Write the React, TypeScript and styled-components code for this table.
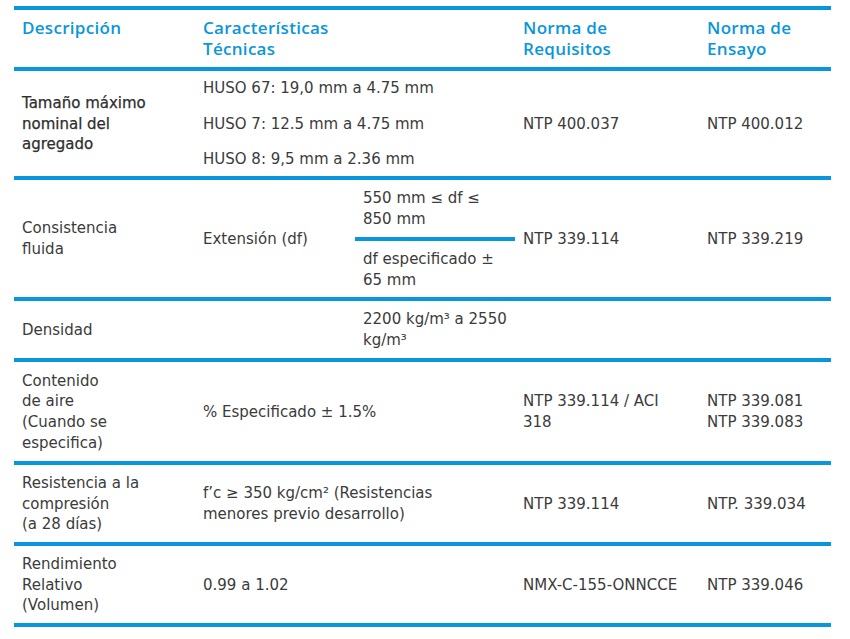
import React from 'react';
import styled, { createGlobalStyle } from 'styled-components';

const BLUE = '#0a96dc';
const TEXT = '#3b3b3b';

const GlobalStyle = createGlobalStyle`
  html, body {
    margin: 0;
    padding: 0;
    background: #ffffff;
  }
  body {
    font-family: "DejaVu Sans", "Open Sans", sans-serif;
    color: ${TEXT};
  }
`;

const Page = styled.div`
  padding: 6px 0 0 14px;
`;

const Table = styled.table`
  width: 817px;
  table-layout: fixed;
  border-collapse: separate;
  border-spacing: 0;
  border-top: 4px solid ${BLUE};
`;

const Row = styled.tr<{ $h: number }>`
  height: ${(p) => p.$h}px;
`;

const HeadCell = styled.th`
  text-align: left;
  vertical-align: top;
  padding: 7px 8px 0;
  font-family: "Open Sans", "Noto Sans", sans-serif;
  font-size: 17px;
  font-weight: 600;
  letter-spacing: 0.3px;
  line-height: 21px;
  color: ${BLUE};
  border-bottom: 4px solid ${BLUE};
`;

const Cell = styled.td<{ $strong?: boolean }>`
  vertical-align: middle;
  padding: 1px 8px 0;
  font-size: 15px;
  line-height: 20.7px;
  font-weight: 400;
  color: ${(p) => (p.$strong ? '#2e2e2e' : TEXT)};
  -webkit-text-stroke: ${(p) => (p.$strong ? '0.25px' : '0')};
  border-bottom: 4px solid ${BLUE};
`;

const Stack = styled.div`
  display: flex;
  flex-direction: column;
  gap: 15px;
`;

export default function App(): JSX.Element {
  return (
    <Page>
      <GlobalStyle />
      <Table>
        <colgroup>
          <col style={{ width: 181 }} />
          <col style={{ width: 160 }} />
          <col style={{ width: 160 }} />
          <col style={{ width: 184 }} />
          <col style={{ width: 132 }} />
        </colgroup>
        <thead>
          <Row $h={61}>
            <HeadCell>Descripción</HeadCell>
            <HeadCell colSpan={2}>Características<br />Técnicas</HeadCell>
            <HeadCell>Norma de<br />Requisitos</HeadCell>
            <HeadCell>Norma de<br />Ensayo</HeadCell>
          </Row>
        </thead>
        <tbody>
          <Row $h={109}>
            <Cell $strong>Tamaño máximo<br />nominal del<br />agregado</Cell>
            <Cell colSpan={2}>
              <Stack>
                <span>HUSO 67: 19,0 mm a 4.75 mm</span>
                <span>HUSO 7: 12.5 mm a 4.75 mm</span>
                <span>HUSO 8: 9,5 mm a 2.36 mm</span>
              </Stack>
            </Cell>
            <Cell>NTP 400.037</Cell>
            <Cell>NTP 400.012</Cell>
          </Row>

          <Row $h={61}>
            <Cell rowSpan={2}>Consistencia<br />fluida</Cell>
            <Cell rowSpan={2}>Extensión (df)</Cell>
            <Cell>550 mm ≤ df ≤<br />850 mm</Cell>
            <Cell rowSpan={2}>NTP 339.114</Cell>
            <Cell rowSpan={2}>NTP 339.219</Cell>
          </Row>
          <Row $h={60}>
            <Cell>df especificado ±<br />65 mm</Cell>
          </Row>

          <Row $h={61}>
            <Cell>Densidad</Cell>
            <Cell />
            <Cell>2200 kg/m³ a 2550<br />kg/m³</Cell>
            <Cell />
            <Cell />
          </Row>

          <Row $h={103}>
            <Cell>Contenido<br />de aire<br />(Cuando se<br />especifica)</Cell>
            <Cell colSpan={2}>% Especificado ± 1.5%</Cell>
            <Cell>NTP 339.114 / ACI<br />318</Cell>
            <Cell>NTP 339.081<br />NTP 339.083</Cell>
          </Row>

          <Row $h={81}>
            <Cell>Resistencia a la<br />compresión<br />(a 28 días)</Cell>
            <Cell colSpan={2}>f’c ≥ 350 kg/cm² (Resistencias<br />menores previo desarrollo)</Cell>
            <Cell>NTP 339.114</Cell>
            <Cell>NTP. 339.034</Cell>
          </Row>

          <Row $h={81}>
            <Cell>Rendimiento<br />Relativo<br />(Volumen)</Cell>
            <Cell colSpan={2}>0.99 a 1.02</Cell>
            <Cell>NMX-C-155-ONNCCE</Cell>
            <Cell>NTP 339.046</Cell>
          </Row>
        </tbody>
      </Table>
    </Page>
  );
}
